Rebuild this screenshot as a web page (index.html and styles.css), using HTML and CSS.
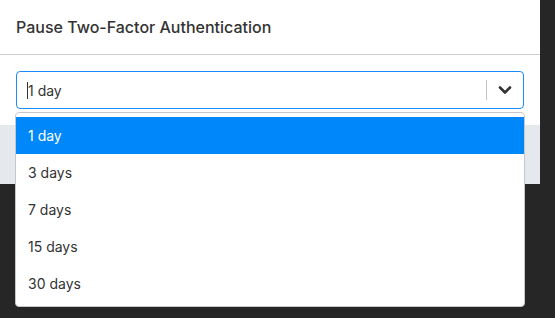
FILE: index.html
```html
<!DOCTYPE html>
<html lang="en">
<head>
    <meta charset="UTF-8">
    <meta name="viewport" content="width=device-width, initial-scale=1.0">
    <title>Pause Two-Factor Authentication</title>
    <link rel="stylesheet" href="styles.css">
</head>
<body>
    <div class="modal">
        <div class="modal-header">
            <h2>Pause Two-Factor Authentication</h2>
        </div>
        <div class="modal-body">
            <div class="select">
                <div class="select-value"><span class="caret"></span>1 day</div>
                <div class="select-indicators">
                    <span class="separator"></span>
                    <svg class="chevron" width="14" height="10" viewBox="0 0 14 10">
                        <path d="M2 2.5 L7 7.5 L12 2.5" fill="none" stroke="#333" stroke-width="2.6" stroke-linecap="round" stroke-linejoin="round"/>
                    </svg>
                </div>
            </div>
            <ul class="menu">
                <li class="option selected">1 day</li>
                <li class="option">3 days</li>
                <li class="option">7 days</li>
                <li class="option">15 days</li>
                <li class="option">30 days</li>
            </ul>
        </div>
        <div class="modal-footer"></div>
    </div>
</body>
</html>
```

FILE: styles.css
```css
html, body { height: 100%; }
body { margin: 0; min-height: 318px; background: #262626; font-family: Inter, "Noto Sans", sans-serif; color: #333; }
.modal { width: 540px; background: #fff; position: relative; }
.modal-header { height: 54px; border-bottom: 1px solid #c9cdd2; display: flex; align-items: center; padding: 0 16px; }
.modal-header h2 { margin: 0; font-size: 16px; font-weight: 500; color: #333; }
.modal-body { padding: 16px; }
.select { height: 38px; box-sizing: border-box; border: 1px solid #1a8cff; border-radius: 4px; display: flex; align-items: center; }
.select-value { flex: 1; padding-left: 10px; font-size: 14px; display: flex; align-items: center; }
.caret { display: inline-block; width: 1px; height: 17px; background: #333; }
.select-indicators { display: flex; align-items: center; height: 100%; }
.separator { width: 1px; height: 20px; background: #c4c4c4; }
.chevron { margin: 0 11px; }
.modal-footer { height: 59px; background: #e5e8ec; }
.menu { position: absolute; z-index: 2; top: 112px; left: 15px; width: 510px; box-sizing: border-box; margin: 0; padding: 4px 0; list-style: none; background: #fff; border: 1px solid #c4c7cc; border-radius: 4px; }
.option { height: 37px; display: flex; align-items: center; padding-left: 12px; font-size: 14px; color: #333; }
.option.selected { background: #0088fa; color: #fff; }
```
